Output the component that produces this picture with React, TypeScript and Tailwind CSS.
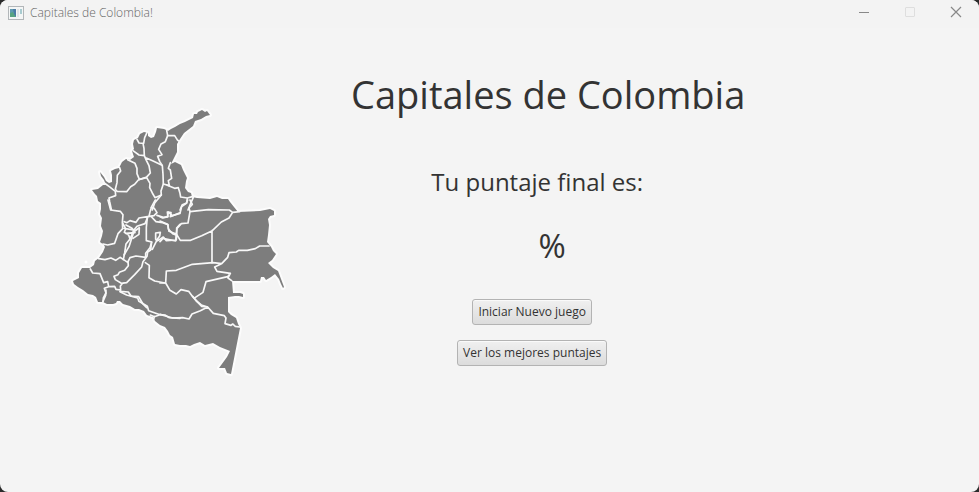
import React from "react";

const border = {
  fill: "none",
  stroke: "#f8f8f8",
  strokeWidth: 5,
  strokeLinejoin: "round" as const,
  strokeLinecap: "round" as const,
};

function AppIcon() {
  return (
    <svg className="h-[14px] w-4" viewBox="0 0 16 14" aria-hidden="true">
      <rect x="0.5" y="0.5" width="15" height="13" fill="#f4f6f6" stroke="#b2b6b9" />
      <rect x="2" y="3" width="6" height="8" fill="#5f9bb0" />
      <path d="M2 11V7l3-1 3 5z" fill="#58a481" />
      <path d="M5 3h3v8L6 8z" fill="#4b7ba5" />
      <rect x="9" y="3" width="2" height="8" fill="#dfe4e7" />
      <rect x="12" y="3" width="2" height="5" fill="#a8cbd0" />
    </svg>
  );
}

function ColombiaMap() {
  return (
    <svg className="h-[280px] w-[230px] shrink-0" viewBox="64 102 230 280" role="img" aria-label="Mapa de Colombia">
      <path
        d="M210 115L207 111L205 112L202 110L198 112L197 114L194 114L193 118L189 120L185 122L180 124L175 127L171 129L168 131L164 129L157 128L156 132L154 137L151 138L148 136L148 133L144 132L140 134L138 138L134 140L133 144L134 149L132 151L134 157L130 160L126 159L122 162L119 168L115 169L111 171L112 175L112 182L109 183L106 181L104 177L100 172L101 176L104 180L106 185L103 185L98 189L92 190L95 194L97 196L98 201L101 203L101 209L100 214L102 218L101 226L103 231L102 236L100 242L104 245L105 247L103 252L99 258L95 261L94 265L90 268L86 268L82 268L79 273L79 278L73 281L74 284L78 287L83 290L88 294L93 295L96 297L98 302L103 302L107 304L113 304L116 303L117 301L120 301L123 304L130 306L135 309L139 309L144 311L147 315L153 317L155 321L160 325L165 327L168 331L170 335L173 337L175 344L180 345L186 345L190 346L194 344L200 342L205 345L213 343L220 347L230 351L227 357L219 368L225 368L227 373L231 374L240 328L238 324L236 318L231 315L228 312L228 297L235 296L239 296L243 297L243 294L240 293L233 293L232 281L260 281L261 277L264 277L266 280L271 277L275 274L279 279L281 284L283 288L284 287L281 279L278 271L273 268L268 263L272 260L276 254L273 251L271 247L267 242L268 235L269 225L268 219L270 216L274 215L274 211L270 209L260 211L238 212L230 202L228 199L222 199L217 197L210 199L197 198L192 197L191 193L188 192L185 188L186 181L187 178L183 170L181 165L177 163L175 162L171 164L175 156L177 152L177 144L180 139L184 133L193 126L195 121L201 119L206 116Z"
        fill="#7d7d7d"
        stroke="#fcfcfc"
        strokeWidth="4"
        strokeLinejoin="round"
        paintOrder="stroke"
      />
      <g transform="translate(60 100) scale(.3333)" {...border}>
        <path d="M320 91L323 107L316 125L303 132L296 148L306 164L293 169L299 184L307 197L309 222L310 252L303 273L304 285L285 293L277 279L269 263L270 250L260 233L238 238L231 221L231 205L225 190L203 179" />
        <path d="M323 107L344 107L353 121L360 125M231 118L237 129L251 130L254 113L261 98M219 152L237 165L253 167L252 145L249 130M253 167L259 181L267 197L271 219L261 230M259 174L281 184L306 196M179 203L182 213L172 226L171 248L166 268L171 274L200 275L212 260L224 253L235 240L258 232" />
        <path d="M133 249L148 260L166 274L167 287L147 294L149 305L154 328M304 285L284 309L277 330M310 252L328 257L325 242L335 235L331 210L325 205L331 188" />
        <path d="M322 256L344 265L355 263L360 280L362 291L382 294L397 290M382 294L380 309L367 314L360 330M400 292L392 310L384 330" />
      </g>
      <g transform="translate(60 200) scale(.3333)" {...border}>
        <path d="M144 0L152 30L181 34L189 44L187 67L188 86L174 101L164 130L143 135L129 132M286 0L275 20L271 32L267 49L237 54L228 67L210 62L201 68L193 65M187 67L197 86L193 97L206 105L210 117L198 132L194 159L190 179M193 85L220 90L225 98L197 100M198 75L216 85L221 91L209 120M221 91L231 79L255 71L264 50M225 93L238 83L237 103L219 115" />
        <path d="M267 49L282 47L291 38L283 25L274 22M291 46L310 52L324 50L322 36L333 38L331 50L360 38M272 48L288 65L308 68L324 74L325 87L338 101L350 106L350 84L360 73M262 52L259 82L259 122L275 126L270 143L257 160L257 172L228 168L210 173L203 187L191 179L180 172L167 181L153 174L135 179L116 176M222 94L207 140L192 165" />
        <path d="M350 106L349 120L319 122L310 111L298 119L289 124L277 148M287 118L287 99L301 97L299 108L289 122M275 126L272 150L263 156L261 169L249 185L245 201L224 224L209 239L200 248L184 250L166 239L162 229L174 224L178 217L194 211L205 197L204 185M256 188L268 196L267 233L284 243L315 249M91 207L98 219L120 221L131 248L143 245L146 260L133 265L138 279L130 294L129 306M146 260L164 259L168 268L182 270L181 274L205 276L213 288L236 290L249 312L260 323M182 270L181 258L189 249" />
      </g>
      <g transform="translate(160 200) scale(.3333)" {...border}>
        <path d="M0 50L8 54L22 51L25 36L37 47L60 40L65 20L79 10L83 0M90 0L97 13L87 24L90 35L145 29L208 30L218 37L239 35M218 37L207 54L184 66L157 92L125 107L92 121L61 121L49 102L51 85L64 71L84 69L90 35M49 102L27 94L23 73L0 63M49 102L47 123L9 115L0 125M156 92V188" />
        <path d="M327 138L299 138L286 146L262 151L236 151L229 156L207 158L203 172L185 191L159 188L97 193L49 211L19 213L17 249H0M17 249L30 271L49 282L63 269L86 274L98 290L125 319L142 321M183 192L164 201L171 214L211 220L203 230L138 245L129 277L105 293M211 220L204 234L215 242" />
      </g>
      <g transform="translate(160 290) scale(.3333)" {...border}>
        <path d="M98 19L109 33L124 45L143 51L160 70L193 77L198 84L195 101L213 106L218 102L226 109L239 111M143 51L121 62L96 72L87 87L68 83L38 84L0 73" />
      </g>
      <g transform="translate(60 290) scale(.3333)" {...border}>
        <path d="M138 0L137 16L129 34M180 5L200 15L233 24L237 34L262 49L266 62L300 74L315 75L327 83L360 85M271 75L283 80L300 74M283 80L280 91" />
      </g>
      <circle cx="86" cy="262" r="1.5" fill="#fff" />
    </svg>
  );
}

const windowButton = "flex h-6 w-[46px] items-center justify-center";
const actionButton =
  "h-[26px] rounded-[3px] border border-[#b3b3b3] bg-linear-to-b from-[#f0f0f0] to-[#dcdcdc] px-[5px] text-[12px] leading-[16px] whitespace-nowrap shadow-[inset_0_1px_0_#fafafa]";

export default function App() {
  return (
    <div className="bg-[#2b2b2b]">
      <div className="flex min-h-screen flex-col overflow-hidden rounded-lg bg-[#f4f4f4] font-['Open_Sans','Noto_Sans',sans-serif] text-[#333]">
        <header className="flex h-7 items-start bg-[#f3f3f3] pl-2 text-[#666]">
          <div className="flex h-[26px] flex-1 items-center gap-[6px]">
            <AppIcon />
            <span className="text-[12px] leading-[16px] font-light">Capitales de Colombia!</span>
          </div>
          <button className={windowButton} aria-label="Minimizar">
            <svg className="h-3 w-3" viewBox="0 0 12 12" stroke="#888"><path d="M1 6.5h10" /></svg>
          </button>
          <button className={windowButton} aria-label="Maximizar" disabled>
            <svg className="h-3 w-3" viewBox="0 0 12 12" fill="none" stroke="#dedede"><rect x="1.5" y="1.5" width="9" height="9" rx=".5" /></svg>
          </button>
          <button className={windowButton} aria-label="Cerrar">
            <svg className="h-3 w-3" viewBox="0 0 12 12" stroke="#888" strokeWidth="1.2"><path d="M1 1l10 10M11 1L1 11" /></svg>
          </button>
        </header>
        <main className="flex flex-1 items-start gap-[57px] pt-[38px] pl-16">
          <div className="pt-9">
            <ColombiaMap />
          </div>
          <div className="flex flex-col items-center">
            <h1 className="text-[38px] leading-[56px] whitespace-nowrap">Capitales de Colombia</h1>
            <p className="mt-[42px] pr-[22px] text-[24px] leading-[36px] whitespace-nowrap">Tu puntaje final es:</p>
            <p className="mt-6 pl-2 text-[33px] leading-[44px]">%</p>
            <div className="mt-[31px] flex flex-col items-center gap-[15px] pr-8">
              <button className={actionButton}>Iniciar Nuevo juego</button>
              <button className={actionButton}>Ver los mejores puntajes</button>
            </div>
          </div>
        </main>
      </div>
    </div>
  );
}
